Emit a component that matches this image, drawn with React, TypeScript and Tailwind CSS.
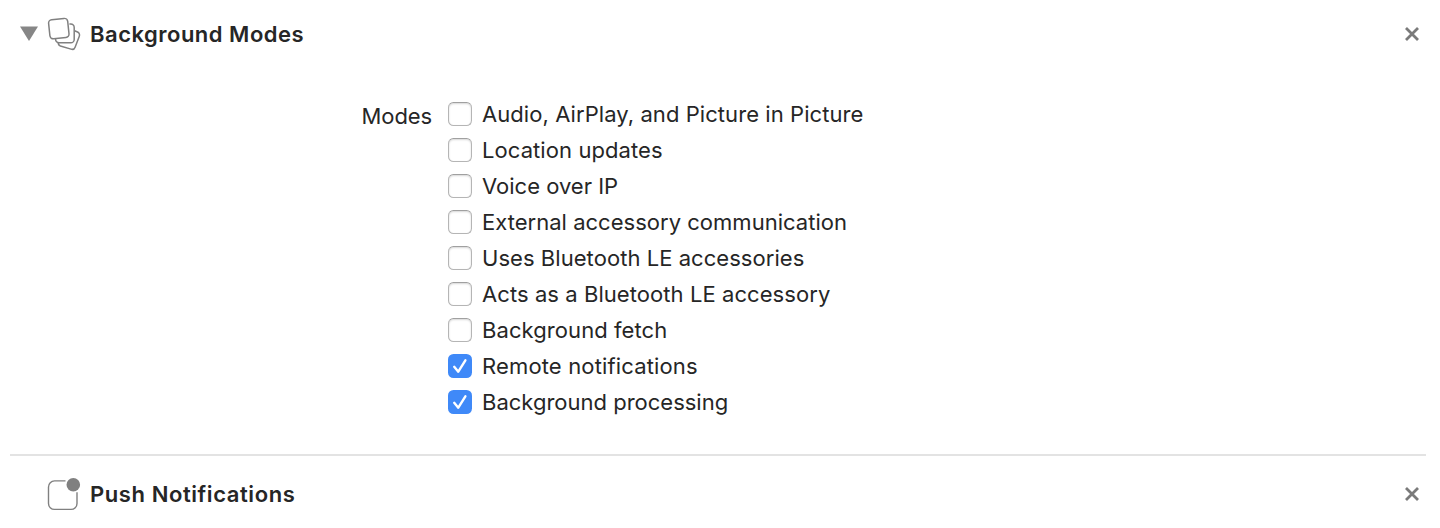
const modes = [
  { label: 'Audio, AirPlay, and Picture in Picture', checked: false, tracking: 'tracking-[0.07px]' },
  { label: 'Location updates', checked: false, tracking: 'tracking-[0.08px]' },
  { label: 'Voice over IP', checked: false, tracking: 'tracking-[0px]' },
  { label: 'External accessory communication', checked: false, tracking: 'tracking-[0.02px]' },
  { label: 'Uses Bluetooth LE accessories', checked: false, tracking: 'tracking-[0.05px]' },
  { label: 'Acts as a Bluetooth LE accessory', checked: false, tracking: 'tracking-[0.07px]' },
  { label: 'Background fetch', checked: false, tracking: 'tracking-[0.08px]' },
  { label: 'Remote notifications', checked: true, tracking: 'tracking-[0.15px]' },
  { label: 'Background processing', checked: true, tracking: 'tracking-[0px]' },
];

function LayersIcon() {
  return (
    <svg width="36" height="40" viewBox="0 0 36 40" fill="none" stroke="#808080" strokeWidth="1.5" className="shrink-0">
      <rect x="3.2" y="5" width="19.2" height="19.2" rx="3.4" transform="rotate(-6 12.8 14.6)" />
      <path d="M23.4 10.1h1.4a3.4 3.4 0 0 1 3.4 3.4v11.9a3.4 3.4 0 0 1-3.4 3.4H13a3.4 3.4 0 0 1-3.4-3.4v-.8" />
      <path d="M28.6 16.8l2.9 1.2a3.2 3.2 0 0 1 1.8 4.2l-4.2 11a3.2 3.2 0 0 1-4.1 1.9L14.4 32a3.2 3.2 0 0 1-2.1-3.2" />
    </svg>
  );
}

function BadgeIcon() {
  return (
    <svg width="36" height="40" viewBox="0 0 36 40" fill="none" className="shrink-0">
      <path d="M19.5 6.9H8.5a6 6 0 0 0-6 6v16.5a6 6 0 0 0 6 6H25a6 6 0 0 0 6-6V18.3" stroke="#808080" strokeWidth="1.4" />
      <circle cx="27.3" cy="10.7" r="6.8" fill="#808080" />
    </svg>
  );
}

function RemoveButton() {
  return (
    <button type="button" aria-label="Remove" className="mr-5 flex size-4">
      <svg width="16" height="16" viewBox="0 0 16 16" stroke="#7a7a7a" strokeWidth="2.8">
        <path d="M2 2l12 12M14 2L2 14" />
      </svg>
    </button>
  );
}

function Checkbox({ checked }: { checked: boolean }) {
  if (checked) {
    return (
      <span role="checkbox" aria-checked="true" className="size-6 shrink-0 rounded-[5.5px] bg-[#3f89f8]">
        <svg width="24" height="24" viewBox="0 0 24 24" fill="none" stroke="white" strokeWidth="2.4" strokeLinecap="round" strokeLinejoin="round">
          <path d="M6.2 12.8l4.1 4.9L17.4 6.3" />
        </svg>
      </span>
    );
  }
  return (
    <span
      role="checkbox"
      aria-checked="false"
      className="size-6 shrink-0 rounded-[5.5px] border border-[#b5b5b5] border-t-[#a0a0a0] bg-white shadow-[inset_0_1px_2px_rgba(0,0,0,0.16)]"
    />
  );
}

export default function App() {
  return (
    <main className="flex h-[528px] flex-col overflow-hidden bg-white font-['Inter',sans-serif] text-[22px] leading-[36px] text-[#262626]">
      <header className="flex h-[68px] shrink-0 items-center pl-5">
        <svg width="18" height="16" viewBox="0 0 18 16" fill="#868686" className="mr-2">
          <path d="M0 .5h18L9 15z" />
        </svg>
        <LayersIcon />
        <h2 className="ml-2 flex-1 font-semibold tracking-[0.5px]">Background Modes</h2>
        <RemoveButton />
      </header>
      <section className="flex h-[386px] shrink-0 pt-7">
        <span className="w-[432px] pt-0.5 text-right tracking-[-0.1px]">Modes</span>
        <ul className="ml-4">
          {modes.map((mode) => (
            <li key={mode.label} className="flex h-9 items-center gap-2.5">
              <Checkbox checked={mode.checked} />
              <span className={mode.tracking}>{mode.label}</span>
            </li>
          ))}
        </ul>
      </section>
      <hr className="mr-3.5 ml-2.5 h-0.5 shrink-0 border-0 bg-[#e3e3e3]" />
      <header className="flex h-[72px] shrink-0 items-center pt-1 pl-[46px]">
        <BadgeIcon />
        <h2 className="ml-2 flex-1 font-semibold tracking-[0.58px]">Push Notifications</h2>
        <RemoveButton />
      </header>
    </main>
  );
}
